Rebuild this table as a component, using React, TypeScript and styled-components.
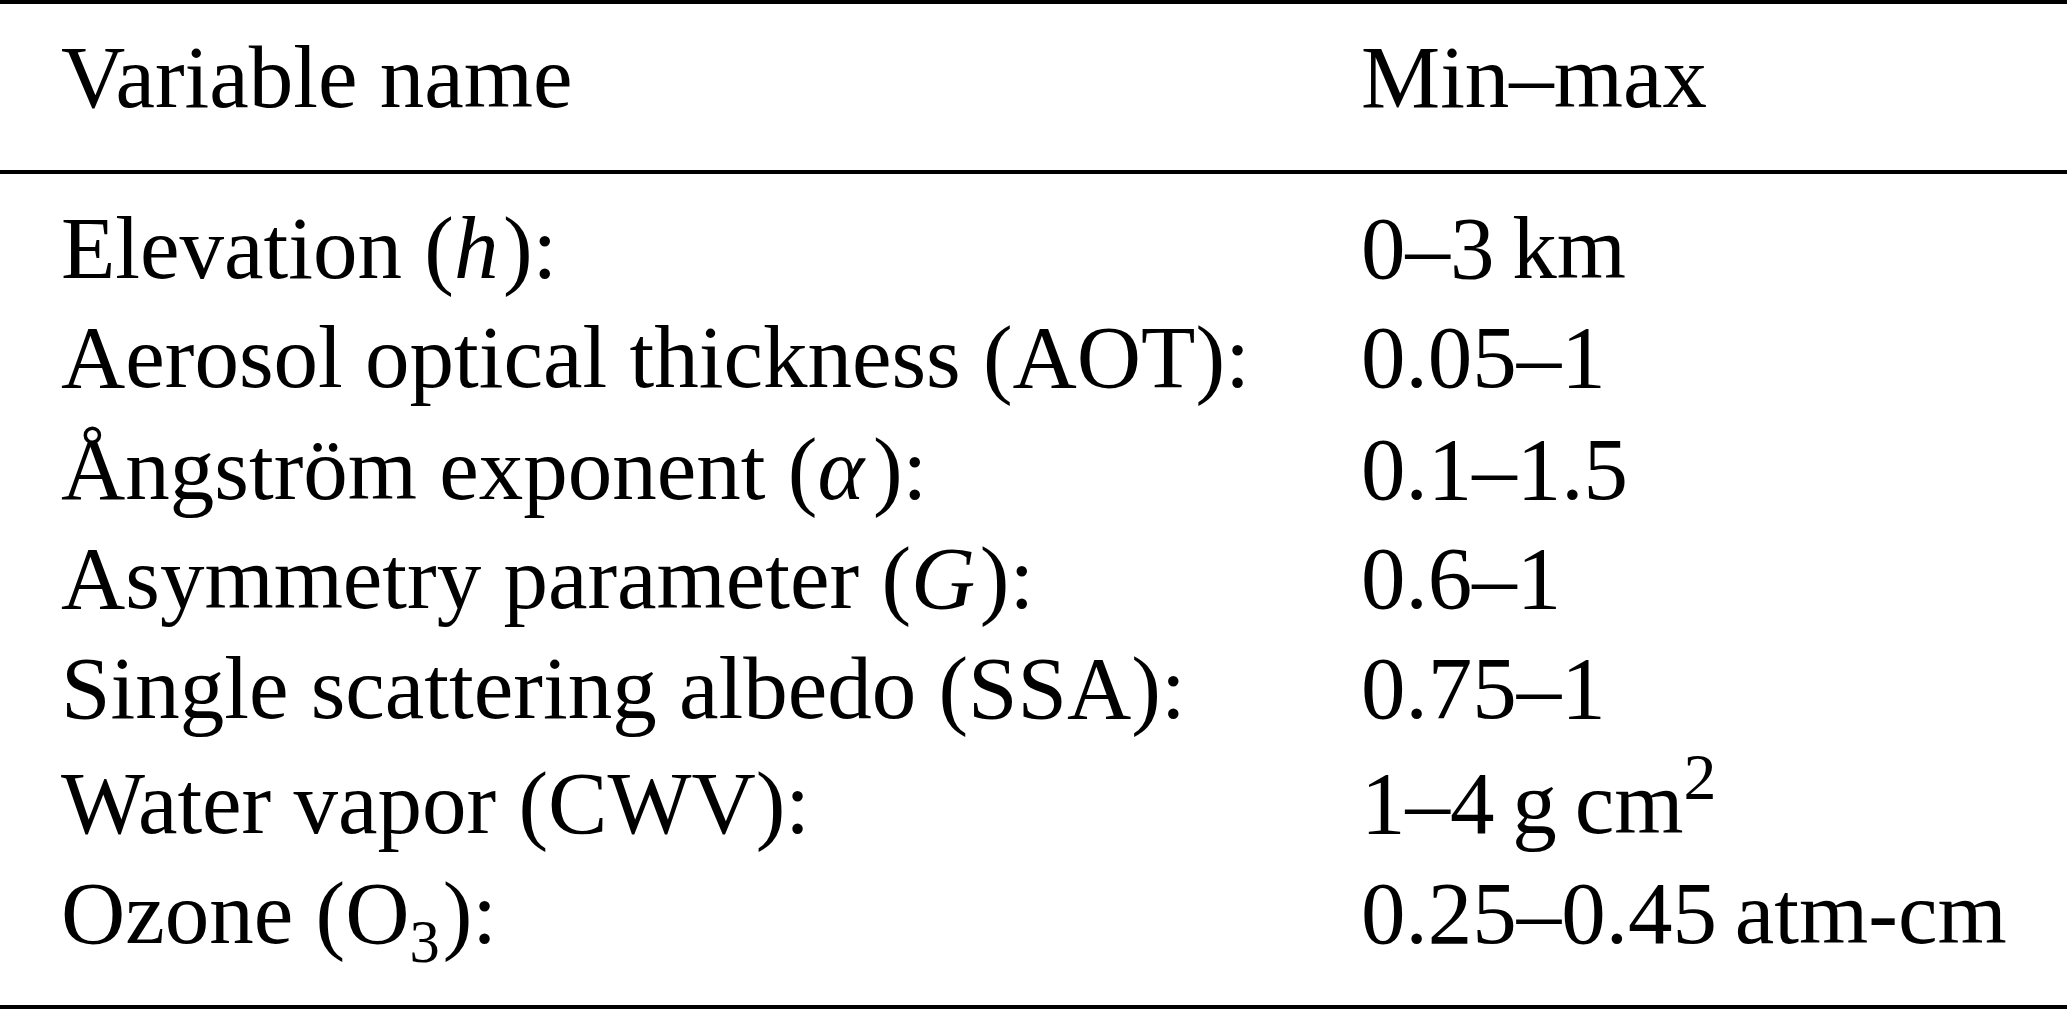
import React from "react";
import styled, { createGlobalStyle } from "styled-components";

const Global = createGlobalStyle`
  html, body { margin: 0; padding: 0; background: #ffffff; }
  body {
    font-family: "Liberation Serif", "Times New Roman", serif;
    color: #000000;
  }
`;

const Table = styled.div`
  width: 2067px;
  border-top: 4px solid #000;
  border-bottom: 4px solid #000;
  font-size: 89px;
  line-height: 109.5px;
`;

const Head = styled.div`
  padding: 19px 0 37px 61px;
  border-bottom: 4px solid #000;
`;

const Body = styled.div`
  display: flex;
  flex-direction: column;
  padding: 20px 0 37px 61px;
`;

const Row = styled.div<{ $lift?: number }>`
  display: grid;
  grid-template-columns: 1300px 1fr;
  margin-top: ${(p) => p.$lift ?? 0}px;
  white-space: nowrap;
`;

const Cell = styled.div``;

const MathVar = styled.i<{ $gap?: number }>`
  font-style: italic;
  padding-right: ${(p) => p.$gap ?? 0.04}em;
`;

const Sup = styled.sup`
  font-size: 0.74em;
  line-height: 0;
  vertical-align: 34px;
`;

const Sub = styled.sub`
  font-size: 0.68em;
  line-height: 0;
  vertical-align: -19px;
  padding-right: 0.05em;
`;

type Item = { name: React.ReactNode; range: React.ReactNode; lift?: number };

const T = "\u2009";

const rows: Item[] = [
  {
    name: (
      <>
        Elevation (<MathVar $gap={0.05}>h</MathVar>):
      </>
    ),
    range: <>0–3{T}km</>,
  },
  { name: <>Aerosol optical thickness (AOT):</>, range: <>0.05–1</> },
  {
    name: (
      <>
        Ångström exponent (<MathVar $gap={0.1}>α</MathVar>):
      </>
    ),
    range: <>0.1–1.5</>,
    lift: 2,
  },
  {
    name: (
      <>
        Asymmetry parameter (<MathVar $gap={0.05}>G</MathVar>):
      </>
    ),
    range: <>0.6–1</>,
  },
  { name: <>Single scattering albedo (SSA):</>, range: <>0.75–1</> },
  {
    name: <>Water vapor (CWV):</>,
    range: (
      <>
        1–4{T}g{T}cm<Sup>2</Sup>
      </>
    ),
    lift: 6,
  },
  {
    name: (
      <>
        Ozone (O<Sub>3</Sub>):
      </>
    ),
    range: <>0.25–0.45{T}atm-cm</>,
  },
];

export default function App() {
  return (
    <>
      <Global />
      <Table>
        <Head>
          <Row>
            <Cell>Variable name</Cell>
            <Cell>Min–max</Cell>
          </Row>
        </Head>
        <Body>
          {rows.map((r, i) => (
            <Row key={i} $lift={r.lift}>
              <Cell>{r.name}</Cell>
              <Cell>{r.range}</Cell>
            </Row>
          ))}
        </Body>
      </Table>
    </>
  );
}
